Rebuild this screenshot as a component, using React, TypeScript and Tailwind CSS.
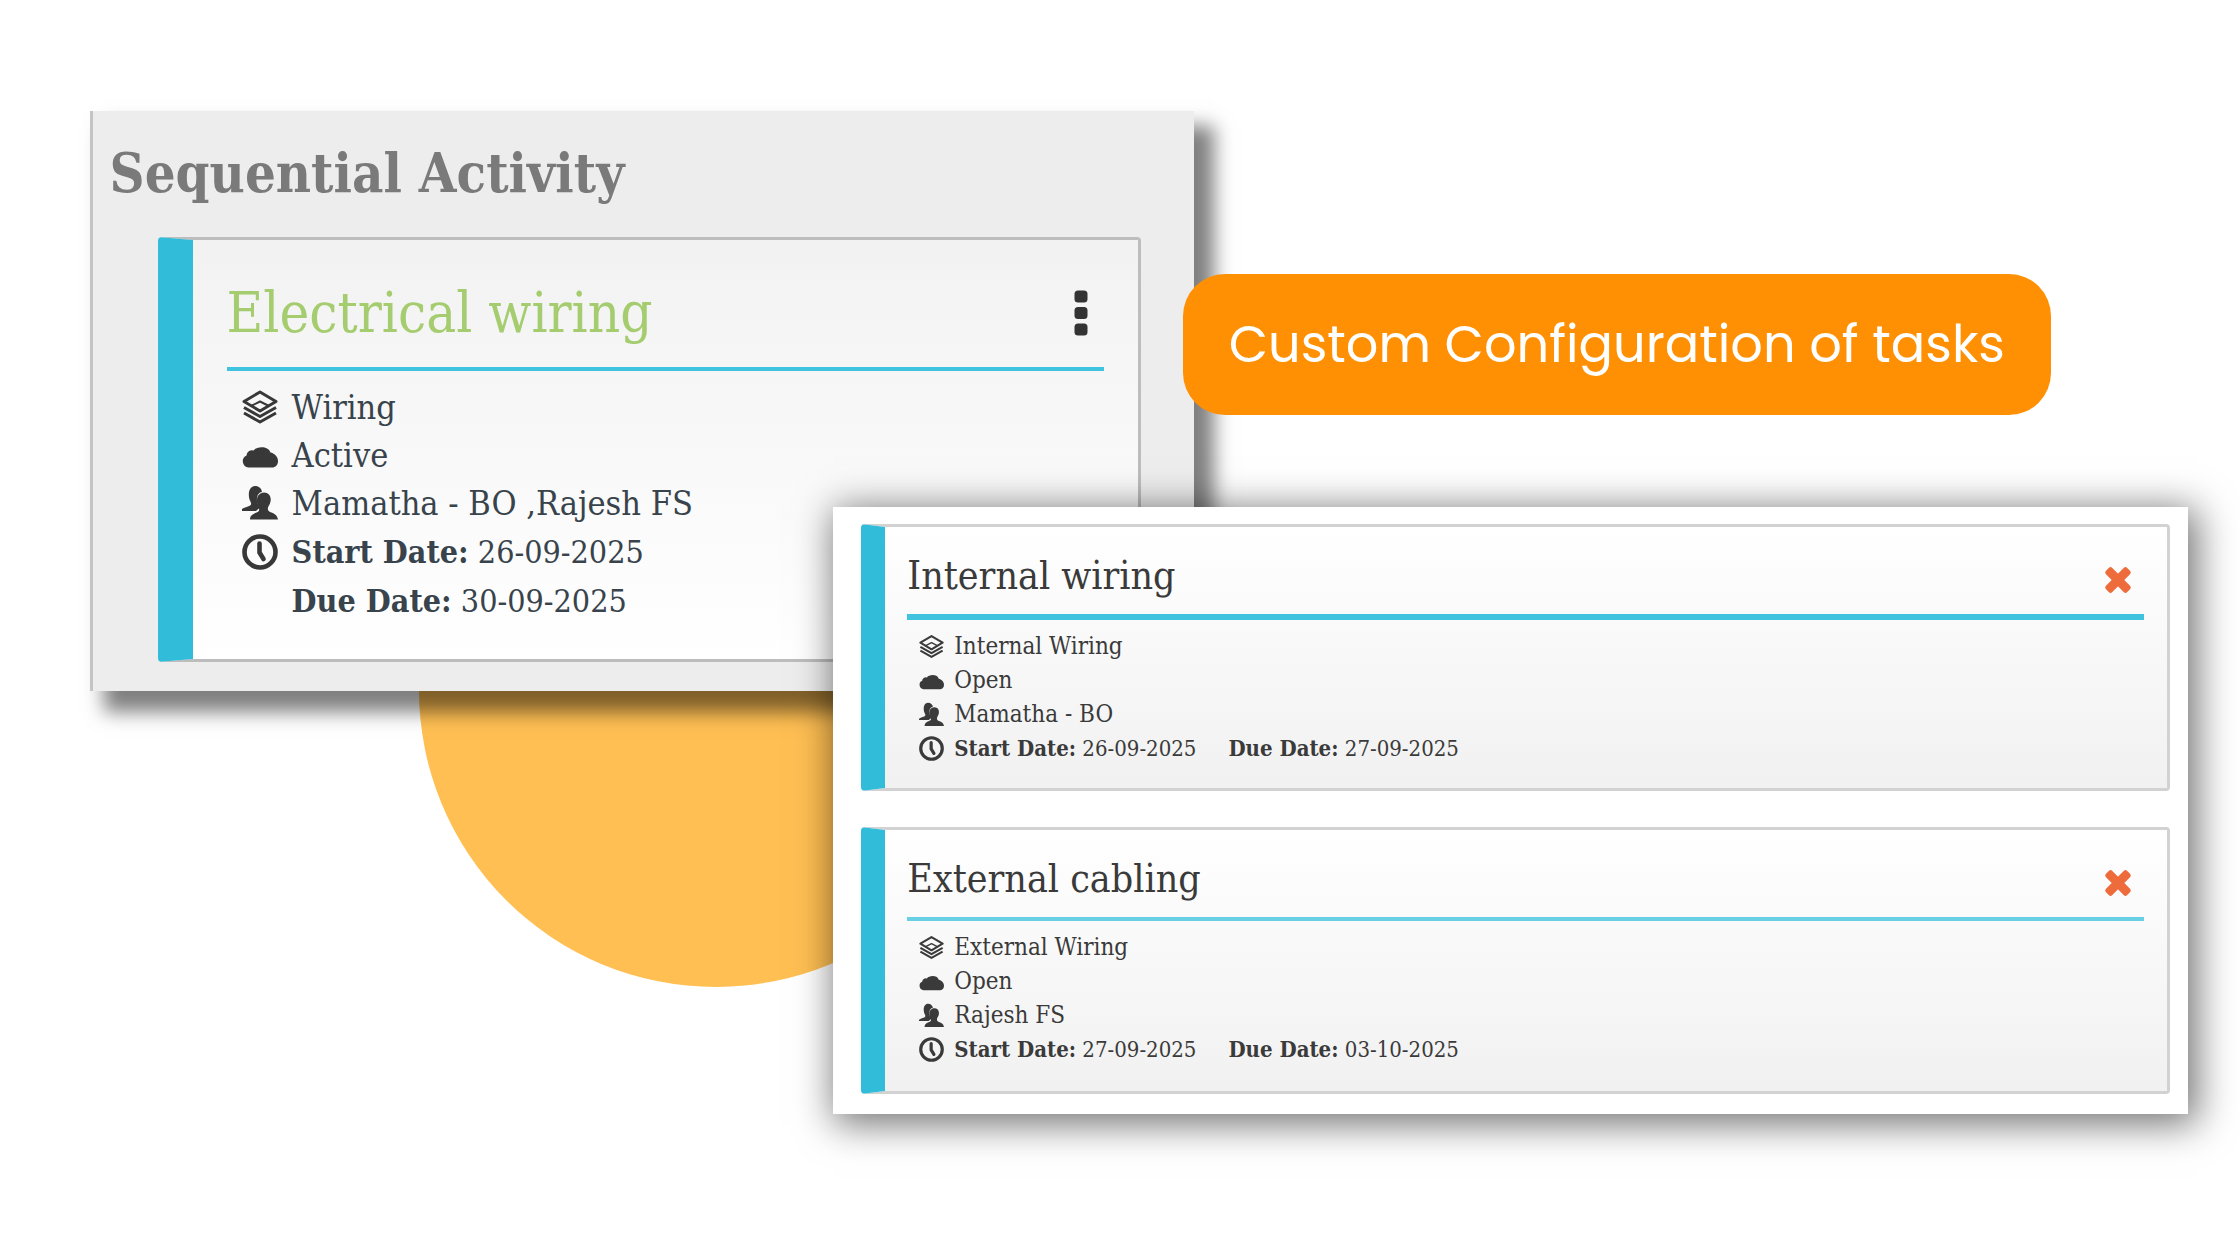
import type { ReactNode } from "react";

type Task = {
    title: string;
    type: string;
    status: string;
    people: string;
    start: string;
    due: string;
};

const mainTask: Task = {
    title: "Electrical wiring",
    type: "Wiring",
    status: "Active",
    people: "Mamatha - BO ,Rajesh FS",
    start: "26-09-2025",
    due: "30-09-2025",
};

const subTasks: Task[] = [
    {
        title: "Internal wiring",
        type: "Internal Wiring",
        status: "Open",
        people: "Mamatha - BO",
        start: "26-09-2025",
        due: "27-09-2025",
    },
    {
        title: "External cabling",
        type: "External Wiring",
        status: "Open",
        people: "Rajesh FS",
        start: "27-09-2025",
        due: "03-10-2025",
    },
];

function LayersIcon() {
    return (
        <svg viewBox="0 0 36 36" className="w-full" fill="none" stroke="currentColor" strokeWidth="3" strokeLinejoin="round" aria-hidden="true">
            <path d="M18 3 34 12.500 18 22 2 12.500Z" />
            <path d="M2 18.500 18 27.500 34 18.500" />
            <path d="M2 24 18 33 34 24" />
            <path d="M9 17 18 12.500 27 17" strokeWidth="2" />
        </svg>
    );
}

function CloudIcon() {
    return (
        <svg viewBox="0 0 36 36" className="w-full" fill="currentColor" aria-hidden="true">
            <path d="M6.500 30.500A6.300 6.300 0 0 1 4.500 18.500 5.500 5.500 0 0 1 11.500 13.500C14 9.500 26 8 28.500 15.500 32 16 36 19.500 36 24c0 4-2.500 6.500-6 6.500Z" />
        </svg>
    );
}

function UsersIcon() {
    return (
        <svg viewBox="0 0 36 36" className="w-full" fill="currentColor" aria-hidden="true">
            <path d="M13 1c4 0 6.500 2.500 7 6-4 .5-5.500 5-5 9 .3 3 1.500 5 3 6.500L14 26H0v-2c3-2 8-2.500 9-4.500.5-1.500-.5-2.500-1.500-5C5.500 7 8 1 13 1Z" />
            <path d="M22 7.500c5 0 7.500 4 6.500 9-.5 3-2 4-2.500 6-.4 2 0 3.500 2 4.500 4 1.500 7 2.500 8 7.500H8c0-4 3-5.500 6.500-7 2.500-1 3-2 2.500-4-.5-1.500-1.500-3-2-6-.7-5.500 2-10 7-10Z" />
        </svg>
    );
}

function ClockIcon() {
    return (
        <svg viewBox="0 0 36 36" className="w-full" fill="none" stroke="currentColor" strokeWidth="4.6" strokeLinecap="round" strokeLinejoin="round" aria-hidden="true">
            <circle cx="18" cy="18" r="15.500" />
            <path d="M17.500 9.500v9L21.500 25" />
        </svg>
    );
}

function CrossIcon() {
    return (
        <svg viewBox="0 0 28 28" className="size-7" fill="currentColor" aria-hidden="true">
            <rect x="-1" y="9.500" width="30" height="9" rx="2.500" transform="rotate(45 14 14)" />
            <rect x="-1" y="9.500" width="30" height="9" rx="2.500" transform="rotate(-45 14 14)" />
        </svg>
    );
}

function DotsIcon() {
    return (
        <svg viewBox="0 0 14 46" className="h-[46px] w-[14px]" fill="currentColor" aria-hidden="true">
            <rect x="0.500" y="0.500" width="13" height="12" rx="3.500" />
            <rect x="0.500" y="17" width="13" height="12" rx="3.500" />
            <rect x="0.500" y="33.500" width="13" height="12" rx="3.500" />
        </svg>
    );
}

function Row({ icon, large, children }: { icon?: ReactNode; large?: boolean; children: ReactNode }) {
    return (
        <li className={large ? "flex items-center gap-[14px]" : "flex items-center gap-[10px]"}>
            <span className={large ? "w-9 shrink-0 text-[#383838]" : "w-[25px] shrink-0"}>{icon}</span>
            <span className="whitespace-pre">{children}</span>
        </li>
    );
}

function SubTaskCard({ task, active }: { task: Task; active: boolean }) {
    return (
        <article className="h-[267px] rounded-sm border-3 border-l-24 border-[#d2d2d2] border-l-[#31bdda] bg-linear-to-b from-white to-[#f1f1f1] pl-[22px] pr-[23px] pt-[18px] text-[#3a3a3a]">
            <div className={active ? "flex h-[75px] items-center justify-between border-b-6 border-[#3fc3de] pr-3" : "flex h-[73px] items-center justify-between border-b-4 border-[#68cfe4] pr-3"}>
                <h3 className="pb-2 text-[39px] leading-[48px]">{task.title}</h3>
                <button type="button" aria-label={`Remove ${task.title}`} className="text-[#ee6b3b]">
                    <CrossIcon />
                </button>
            </div>
            <ul className="pl-3 pt-[9px] text-[24px] leading-[34px]">
                <Row icon={<LayersIcon />}>{task.type}</Row>
                <Row icon={<CloudIcon />}>{task.status}</Row>
                <Row icon={<UsersIcon />}>{task.people}</Row>
                <Row icon={<ClockIcon />}>
                    <span className="text-[22px]">
                        <b>Start Date:</b> {task.start}
                        <b className="pl-8">Due Date:</b> {task.due}
                    </span>
                </Row>
            </ul>
        </article>
    );
}

function App() {
    return (
        <main className="relative min-h-screen overflow-hidden bg-white pb-[147px] pt-[111px] font-['Roboto_Slab','DejaVu_Serif_Condensed','DejaVu_Serif',serif]">
            {/* Decorative circle behind both panels */}
            <div className="absolute left-[18.7%] top-[393px] size-[594px] rounded-full bg-[#ffbf53]"></div>

            <section className="relative ml-[4%] h-[580px] w-[49.3%] border-l-3 border-[#c4c4c4] bg-[#ededed] pl-[65px] pr-[53px] shadow-[17px_18px_18px_3px_rgba(0,0,0,0.5)]">
                <h1 className="-ml-12 pt-[26px] text-[54px] font-bold leading-[72px] text-[#7a7a7a]">Sequential Activity</h1>
                <article className="mt-7 h-[425px] rounded-sm border-3 border-l-35 border-[#bdbdbd] border-l-[#31bdda] bg-linear-to-b from-[#f2f2f2] to-white px-[34px] pt-7 text-[#38434c]">
                    <div className="flex h-[103px] items-center justify-between border-b-4 border-[#3fc3de] pb-[10px] pr-4">
                        <h2 className="text-[56px] leading-[72px] text-[#a5cd6f]">{mainTask.title}</h2>
                        <button type="button" aria-label="Task options" className="text-[#333333]">
                            <DotsIcon />
                        </button>
                    </div>
                    <ul className="pl-[15px] pt-3 text-[34px] leading-[48px]">
                        <Row large icon={<LayersIcon />}>{mainTask.type}</Row>
                        <Row large icon={<CloudIcon />}>{mainTask.status}</Row>
                        <Row large icon={<UsersIcon />}>{mainTask.people}</Row>
                        <Row large icon={<ClockIcon />}>
                            <span className="text-[32px]">
                                <b>Start Date:</b> {mainTask.start}
                            </span>
                        </Row>
                        <Row large>
                            <span className="text-[32px]">
                                <b>Due Date:</b> {mainTask.due}
                            </span>
                        </Row>
                    </ul>
                </article>
            </section>

            <section className="relative -mt-[184px] ml-auto mr-[2.3%] flex w-[60.5%] flex-col gap-9 bg-white pb-5 pl-7 pr-[18px] pt-[17px] shadow-[5px_6px_36px_4px_rgba(0,0,0,0.55)]">
                {subTasks.map((task, index) => (
                    <SubTaskCard key={task.title} task={task} active={index === 0} />
                ))}
            </section>

            {/* Feature label over the corner of the first panel */}
            <p className="absolute left-[52.8%] top-[274px] flex h-[141px] w-[38.75%] items-center justify-center whitespace-nowrap rounded-[42px] bg-[#ff9003] font-[Poppins,Lato,sans-serif] text-[51px] text-white">
                Custom Configuration of tasks
            </p>
        </main>
    );
}

export default App;
